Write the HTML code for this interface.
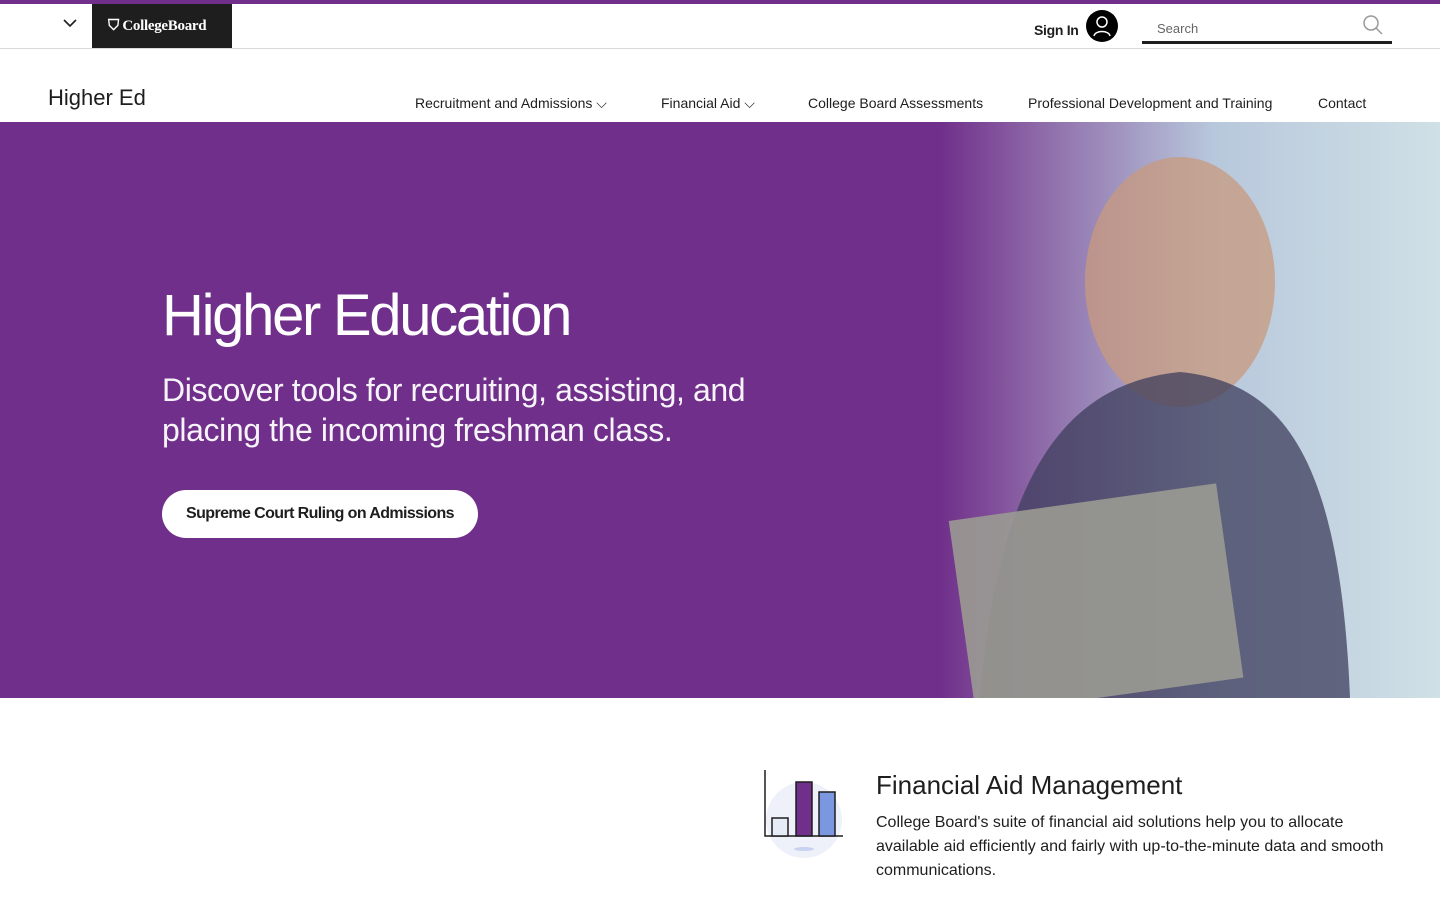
<!DOCTYPE html>
<html><head><meta charset="utf-8"><style>
*{margin:0;padding:0;box-sizing:border-box}
body{width:1440px;height:900px;overflow:hidden;font-family:"Liberation Sans",sans-serif;background:#fff;color:#1e1e1e}
.top{height:4px;background:#702f8a}
.bar{height:45px;border-bottom:1px solid #d9d9d9;position:relative}
.logo{position:absolute;left:92px;top:0;width:140px;height:44px;background:#1e1e1e;color:#fff;font-family:"Liberation Serif",serif;font-weight:bold;font-size:15px;line-height:44px;padding-left:16px;letter-spacing:-0.3px}
.chev{position:absolute;left:63px;top:14px}
.sign{position:absolute;left:1034px;top:18px;font-weight:bold;font-size:14px;letter-spacing:-0.3px}
.av{position:absolute;left:1086px;top:6px;width:32px;height:32px;border-radius:50%;background:#000}
.search{position:absolute;left:1142px;top:4px;width:250px;height:36px;border-bottom:3px solid #1e1e1e;font-size:13px;color:#666;padding:13px 0 0 15px}
.nav{height:73px;position:relative;font-size:14px}
.nav .t{position:absolute;left:48px;top:36px;font-size:22px}
.nav span{position:absolute;top:46px}
.hero{height:576px;background:#702f8a;position:relative;overflow:hidden}
.photo{position:absolute;left:940px;top:0;width:500px;height:576px;background:linear-gradient(90deg,#702f8a 0%,#8e6aa8 20%,#b8c8dc 55%,#cfe0e6 100%)}
.hero h1{position:absolute;left:162px;top:160px;font-size:58px;font-weight:normal;color:#fff;letter-spacing:-2.3px}
.hero p{position:absolute;left:162px;top:248px;font-size:32px;color:#fff;line-height:40px;letter-spacing:-0.4px;opacity:.95}
.btn{position:absolute;left:162px;top:368px;width:316px;height:48px;border-radius:24px;background:#fff;font-weight:bold;font-size:16px;line-height:48px;text-align:center;letter-spacing:-0.6px}
.fa{position:absolute;left:876px;top:770px}
.fa h2{font-size:26px;font-weight:normal}
.fa p{font-size:16px;line-height:24px;margin-top:10px;width:520px}
</style></head><body>
<div class="top"></div>
<div class="bar">
<svg class="chev" width="14" height="10"><path d="M1 2l6 6 6-6" stroke="#1e1e1e" stroke-width="1.6" fill="none"/></svg>
<div class="logo">⛉ CollegeBoard</div>
<div class="sign">Sign In</div>
<div class="av"><svg width="32" height="32"><circle cx="16" cy="12" r="5" stroke="#fff" stroke-width="1.5" fill="none"/><path d="M8 26c1-6 15-6 16 0" stroke="#fff" stroke-width="1.5" fill="none"/></svg></div>
<div class="search">Search<svg style="position:absolute;right:8px;top:6px" width="22" height="22"><circle cx="9" cy="9" r="7" stroke="#999" stroke-width="1.5" fill="none"/><path d="M14 14l6 6" stroke="#999" stroke-width="1.5"/></svg></div>
</div>
<div class="nav"><div class="t">Higher Ed</div>
<span style="left:415px">Recruitment and Admissions ⌵</span>
<span style="left:661px">Financial Aid ⌵</span>
<span style="left:808px">College Board Assessments</span>
<span style="left:1028px">Professional Development and Training</span>
<span style="left:1318px">Contact</span></div>
<div class="hero">
<div class="photo"><svg width="500" height="576"><ellipse cx="240" cy="160" rx="95" ry="125" fill="#c89a7e" opacity=".75"/><path d="M40 576 C60 330 140 260 240 250 C340 260 400 330 410 576Z" fill="#3d3d5c" opacity=".75"/><rect x="20" y="380" width="270" height="196" fill="#9a9a92" opacity=".9" transform="rotate(-8 150 470)"/></svg></div>
<h1>Higher Education</h1>
<p>Discover tools for recruiting, assisting, and<br>placing the incoming freshman class.</p>
<div class="btn">Supreme Court Ruling on Admissions</div>
</div>
<svg style="position:absolute;left:762px;top:768px" width="86" height="92"><circle cx="42" cy="52" r="38" fill="#eef0fa"/><path d="M3 2v66h78" stroke="#1e1e1e" stroke-width="1.5" fill="none"/><rect x="10" y="50" width="16" height="18" fill="#e6ecf7" stroke="#1e1e1e" stroke-width="1.5"/><rect x="34" y="14" width="16" height="54" fill="#702f8a" stroke="#1e1e1e" stroke-width="1.5"/><rect x="57" y="24" width="16" height="44" fill="#7b97e0" stroke="#1e1e1e" stroke-width="1.5"/><ellipse cx="42" cy="81" rx="10" ry="2" fill="#c8d2f0"/></svg>
<div class="fa"><h2>Financial Aid Management</h2><p>College Board's suite of financial aid solutions help you to allocate available aid efficiently and fairly with up-to-the-minute data and smooth communications.</p></div>
</body></html>
